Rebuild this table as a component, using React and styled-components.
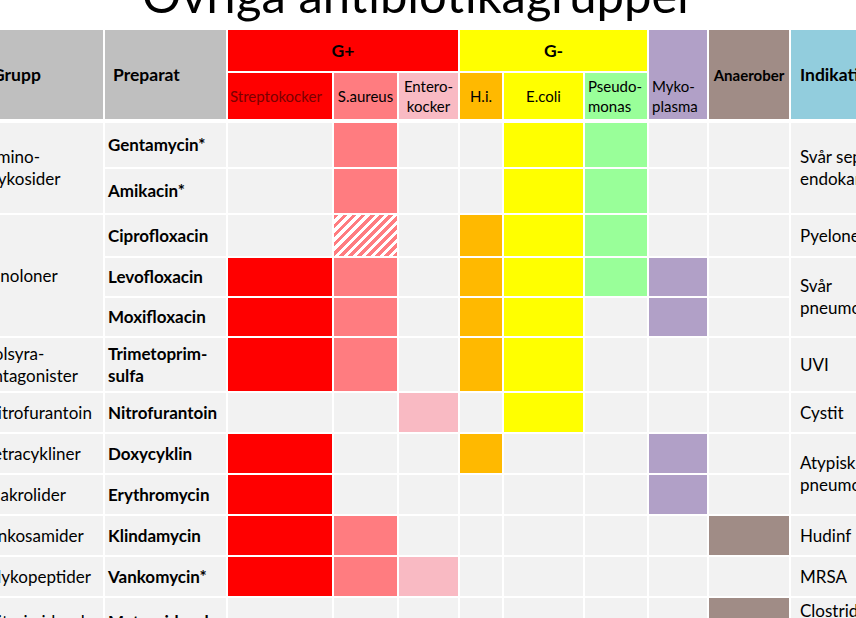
import React from "react";
import styled, { createGlobalStyle, css } from "styled-components";

const GlobalStyle = createGlobalStyle`
  html, body {
    margin: 0;
    padding: 0;
    background: #ffffff;
    overflow: hidden;
  }
  body {
    font-family: Lato, "Open Sans", sans-serif;
    color: #000;
  }
`;

const palette = {
  strep: "#ff0000",
  saur: "#ff7c80",
  ent: "#f9bac3",
  hi: "#ffb900",
  ecoli: "#ffff00",
  pseudo: "#99ff99",
  myko: "#b1a0c7",
  anaer: "#a08c86",
  gray: "#bfbfbf",
  blue: "#92cddd",
  body: "#f2f2f2",
};

const bugs = ["strep", "saur", "ent", "hi", "ecoli", "pseudo", "myko", "anaer"];

const rows = [
  { group: "Amino-\nglykosider", gSpan: 2, drug: "Gentamycin*", marks: ["saur", "ecoli", "pseudo"], ind: "Svår sepsis,\nendokardit", iSpan: 2 },
  { drug: "Amikacin*", marks: ["saur", "ecoli", "pseudo"] },
  { group: "Kinoloner", gSpan: 3, drug: "Ciprofloxacin", marks: ["hi", "ecoli", "pseudo"], hatch: "saur", ind: "Pyelonefrit" },
  { drug: "Levofloxacin", marks: ["strep", "saur", "hi", "ecoli", "pseudo", "myko"], ind: "Svår\npneumoni", iSpan: 2 },
  { drug: "Moxifloxacin", marks: ["strep", "saur", "hi", "ecoli", "myko"] },
  { group: "Folsyra-\nantagonister", drug: "Trimetoprim-\nsulfa", marks: ["strep", "saur", "hi", "ecoli"], ind: "UVI" },
  { group: "Nitrofurantoin", drug: "Nitrofurantoin", marks: ["ent", "ecoli"], ind: "Cystit" },
  { group: "Tetracykliner", drug: "Doxycyklin", marks: ["strep", "hi", "myko"], ind: "Atypisk\npneumoni", iSpan: 2 },
  { group: "Makrolider", drug: "Erythromycin", marks: ["strep", "myko"] },
  { group: "Linkosamider", drug: "Klindamycin", marks: ["strep", "saur", "anaer"], ind: "Hudinf" },
  { group: "Glykopeptider", drug: "Vankomycin*", marks: ["strep", "saur", "ent"], ind: "MRSA" },
  { group: "Nitroimidazoler", drug: "Metronidazol", marks: ["anaer"], ind: "Clostridium\ndifficile" },
];

const Slide = styled.div`
  width: 856px;
  height: 618px;
  overflow: hidden;
`;

const TitleBar = styled.div`
  display: flow-root;
  height: 30px;
  padding-left: 142px;
`;

const Title = styled.h1`
  margin: -31px 0 0;
  font-weight: 400;
  font-size: 49px;
  line-height: 50px;
  white-space: nowrap;
`;

const Grid = styled.div`
  display: grid;
  margin-left: -19px;
  width: max-content;
  grid-template-columns: 122px 121px 104px 63px 59px 42px 79px 62px 58px 80px 140px;
  grid-template-rows: 41px 48px 44px 44px 41px 38px 38px 53px 39px 39px 39px 39px 39px 48px;
  gap: 2px;
  background: #ffffff;
`;

const Cell = styled.div`
  box-sizing: border-box;
  display: flex;
  align-items: center;
  background: ${(p) => p.$bg || palette.body};
  grid-row: ${(p) => (p.$rows ? `span ${p.$rows}` : "auto")};
  grid-column: ${(p) => (p.$cols ? `span ${p.$cols}` : "auto")};
  white-space: pre-line;
  line-height: 22px;
  font-size: 17px;
`;

const HeadCell = styled(Cell)`
  border-bottom: ${(p) => (p.$low ? "2px solid #ffffff" : "none")};
  justify-content: ${(p) => (p.$center ? "center" : "flex-start")};
  text-align: ${(p) => (p.$center ? "center" : "left")};
  font-weight: ${(p) => (p.$bold ? 700 : 400)};
  font-size: ${(p) => p.$size || 17}px;
  line-height: ${(p) => (p.$size && p.$size < 16 ? 20 : 22)}px;
  align-items: ${(p) => (p.$bottom ? "flex-end" : "center")};
  padding: ${(p) => p.$pad || "0"};
  color: ${(p) => p.$ink || "#000"};
`;

const GroupCell = styled(Cell)`
  padding-left: 4px;
`;

const DrugCell = styled(Cell)`
  padding-left: 3px;
  font-weight: 700;
`;

const IndCell = styled(Cell)`
  padding-left: 9px;
`;

const Mark = styled(Cell)`
  ${(p) =>
    p.$hatch &&
    css`
      background: repeating-linear-gradient(
        135deg,
        ${palette.saur} 0 3.4px,
        #ffffff 3.4px 6.4px
      );
    `}
`;

const TableRow = ({ row }) => (
  <>
    {row.group && <GroupCell $rows={row.gSpan}>{row.group}</GroupCell>}
    <DrugCell>{row.drug}</DrugCell>
    {bugs.map((b) => (
      <Mark
        key={b}
        $bg={row.marks.includes(b) ? palette[b] : null}
        $hatch={row.hatch === b}
      />
    ))}
    {row.ind && <IndCell $rows={row.iSpan}>{row.ind}</IndCell>}
  </>
);

export default function App() {
  return (
    <Slide>
      <GlobalStyle />
      <TitleBar>
        <Title>Övriga antibiotikagrupper</Title>
      </TitleBar>
      <Grid>
        <HeadCell $rows={2} $low $bg={palette.gray} $bold $size={17.5} $pad="0 0 0 11px">
          Grupp
        </HeadCell>
        <HeadCell $rows={2} $low $bg={palette.gray} $bold $size={17.5} $pad="0 0 0 8px">
          Preparat
        </HeadCell>
        <HeadCell $cols={3} $bg={palette.strep} $bold $center $size={17.5}>
          G+
        </HeadCell>
        <HeadCell $cols={3} $bg={palette.ecoli} $bold $center $size={17.5}>
          G-
        </HeadCell>
        <HeadCell $rows={2} $low $bg={palette.myko} $bottom $size={15} $pad="0 0 3px 3px">
          {"Myko-\nplasma"}
        </HeadCell>
        <HeadCell $rows={2} $low $bg={palette.anaer} $bold $center $size={15}>
          Anaerober
        </HeadCell>
        <HeadCell $rows={2} $low $bg={palette.blue} $bold $size={17.5} $pad="0 0 0 9px">
          Indikation
        </HeadCell>

        <HeadCell $low $bg={palette.strep} $size={15} $ink="#7a0000" $pad="0 0 0 2px">
          Streptokocker
        </HeadCell>
        <HeadCell $low $bg={palette.saur} $center $size={15}>
          S.aureus
        </HeadCell>
        <HeadCell $low $bg={palette.ent} $center $size={15}>
          {"Entero-\nkocker"}
        </HeadCell>
        <HeadCell $low $bg={palette.hi} $center $size={15}>
          H.i.
        </HeadCell>
        <HeadCell $low $bg={palette.ecoli} $center $size={15}>
          E.coli
        </HeadCell>
        <HeadCell $low $bg={palette.pseudo} $size={15} $pad="0 0 0 3px">
          {"Pseudo-\nmonas"}
        </HeadCell>

        {rows.map((row) => (
          <TableRow key={row.drug} row={row} />
        ))}
      </Grid>
    </Slide>
  );
}
